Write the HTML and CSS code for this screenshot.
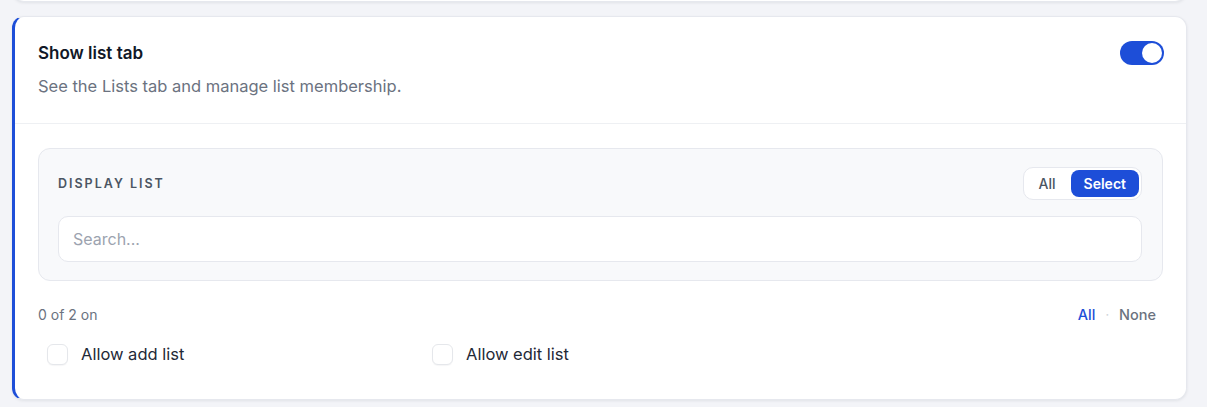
FILE: index.html
```html
<!DOCTYPE html>
<html lang="en">
<head>
<meta charset="utf-8">
<title>Show list tab</title>
<link rel="stylesheet" href="styles.css">
</head>
<body>
<div class="page">
  <div class="card card-prev"></div>
  <section class="card card-active">
    <header class="card-head">
      <div class="head-text">
        <h2 class="title">Show list tab</h2>
        <p class="desc">See the Lists tab and manage list membership.</p>
      </div>
      <button class="toggle on" aria-label="Toggle"><span class="knob"></span></button>
    </header>
    <div class="card-body">
      <div class="panel">
        <div class="panel-top">
          <span class="panel-label">DISPLAY LIST</span>
          <div class="segmented">
            <span class="seg">All</span>
            <span class="seg seg-active">Select</span>
          </div>
        </div>
        <input class="search" type="text" placeholder="Search...">
      </div>
      <div class="count-row">
        <span class="count">0 of 2 on</span>
        <div class="quick">
          <span class="quick-all">All</span>
          <span class="quick-dot">·</span>
          <span class="quick-none">None</span>
        </div>
      </div>
      <div class="checks">
        <label class="check"><span class="box"></span><span class="check-label">Allow add list</span></label>
        <label class="check"><span class="box"></span><span class="check-label">Allow edit list</span></label>
      </div>
    </div>
  </section>
</div>
</body>
</html>
```

FILE: styles.css
```css
* { box-sizing: border-box; }
html, body {
  margin: 0;
  padding: 0;
  background: #f3f4f8;
  font-family: Inter, "Noto Sans", sans-serif;
  color: #111827;
}
.page {
  padding: 0 20px 8px 12px;
  display: flex;
  flex-direction: column;
  gap: 14px;
}
.card {
  background: #fff;
  border: 1px solid #e6e8ee;
  border-radius: 12px;
  box-shadow: 0 1px 3px rgba(15, 23, 42, 0.08);
}
.card-prev {
  height: 40px;
  margin-top: -38px;
}
.card-active {
  border-left: 3px solid #1d4ed8;
}
.card-head {
  display: flex;
  justify-content: space-between;
  align-items: flex-start;
  padding: 24px 22px 25px 23px;
  border-bottom: 1px solid #eef0f3;
}
.title {
  margin: 0;
  font-size: 17px;
  line-height: 24px;
  font-weight: 600;
  color: #111827;
}
.desc {
  margin: 9px 0 0;
  font-size: 16.5px;
  line-height: 24px;
  color: #6b7280;
}
.toggle {
  margin-top: 0;
  width: 44px;
  height: 24px;
  border: none;
  border-radius: 12px;
  background: #1d4ed8;
  padding: 2px;
  display: flex;
  justify-content: flex-end;
  cursor: pointer;
}
.knob {
  width: 20px;
  height: 20px;
  border-radius: 50%;
  background: #fff;
}
.card-body {
  padding: 24px 23px 25px 23px;
}
.panel {
  background: #f8f9fb;
  border: 1px solid #e6e8ee;
  border-radius: 12px;
  padding: 18px 20px 18px 19px;
  display: flex;
  flex-direction: column;
  gap: 16px;
}
.panel-top {
  display: flex;
  justify-content: space-between;
  align-items: center;
}
.panel-label {
  font-size: 12.5px;
  font-weight: 600;
  letter-spacing: 2px;
  color: #4b5563;
}
.segmented {
  display: flex;
  align-items: center;
  background: #fff;
  border: 1px solid #e6e8ee;
  border-radius: 10px;
  padding: 2px;
  gap: 2px;
}
.seg {
  font-size: 14px;
  font-weight: 500;
  color: #4b5563;
  padding: 0 13px;
  height: 27px;
  line-height: 27px;
  border-radius: 8px;
}
.seg-active {
  background: #1d4ed8;
  color: #fff;
  font-weight: 600;
}
.search {
  width: 100%;
  height: 46px;
  border: 1px solid #e6e8ee;
  border-radius: 10px;
  background: #fff;
  padding: 0 14px;
  font-family: inherit;
  font-size: 16px;
  color: #111827;
  outline: none;
}
.search::placeholder { color: #9ca3af; }
.count-row {
  display: flex;
  justify-content: space-between;
  align-items: center;
  margin-top: 23px;
  height: 20px;
}
.count {
  font-size: 14px;
  color: #6b7280;
}
.quick {
  display: flex;
  align-items: center;
  gap: 10px;
  font-size: 14.5px;
  font-weight: 500;
  margin-right: 7px;
}
.quick-all { color: #1d4ed8; }
.quick-dot { color: #d1d5db; font-size: 12px; }
.quick-none { color: #6b7280; }
.checks {
  display: grid;
  grid-template-columns: repeat(3, 1fr);
  column-gap: 30px;
  margin-top: 10px;
}
.check {
  display: flex;
  align-items: center;
  gap: 13px;
  padding: 8px 9px;
  cursor: pointer;
}
.box {
  width: 21px;
  height: 21px;
  border: 1px solid #e5e7eb;
  border-radius: 6px;
  background: #fff;
  box-shadow: 0 1px 1px rgba(15, 23, 42, 0.04);
  flex: none;
}
.check-label {
  font-size: 16.5px;
  line-height: 24px;
  color: #1f2937;
}
```
